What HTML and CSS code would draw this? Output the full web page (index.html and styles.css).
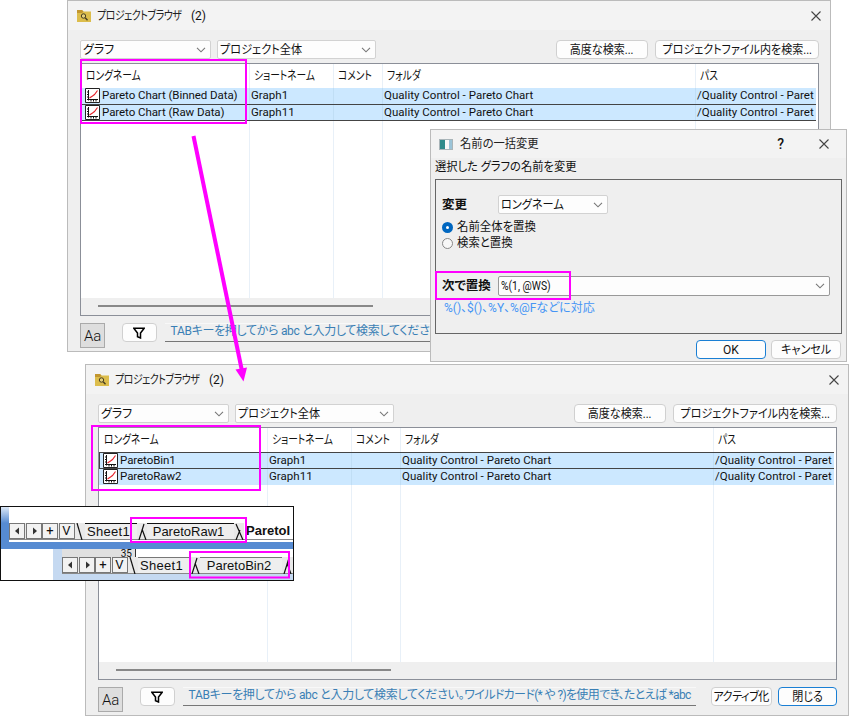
FILE: index.html
```
<!DOCTYPE html>
<html lang="ja">
<head>
<meta charset="utf-8">
<title>プロジェクトブラウザ</title>
<link rel="stylesheet" href="styles.css">
</head>
<body>
<svg class="defs" width="0" height="0">
  <symbol id="chev" viewBox="0 0 10 6"><path d="M1 .8 5 4.8 9 .8" fill="none" stroke="#777" stroke-width="1.1"/></symbol>
  <symbol id="close" viewBox="0 0 10 10"><path d="M.5.5l9 9M9.500.5l-9 9" fill="none" stroke="#444" stroke-width="1.1"/></symbol>
  <symbol id="folder" viewBox="0 0 14 12"><path d="M0 0h5l1.500 1.500H14V12H0z" fill="#dcbd4c"/><path d="M0 0h5l1.500 1.500L5 3H0z" fill="#c2962f"/><circle cx="6.500" cy="6" r="2.200" fill="#e3cf7a" stroke="#473e22"/><path d="M8.200 7.800l2.300 2.500" stroke="#473e22" stroke-width="1.400"/></symbol>
  <symbol id="graph" viewBox="0 0 15 15"><path d="M.5.5h14v14H.5z" fill="#fff" stroke="#222"/><path d="M3.500 2v10.500M2 11.500h11M2 4h1M2 6.500h1M2 9h1M6 12v1.500M8.500 12v1.500M11 12v1.500" stroke="#111" fill="none"/><path d="M4.500 10l3-2 2-1.500 3-4" stroke="#e5202a" stroke-width="1.100" fill="none"/></symbol>
  <symbol id="filter" viewBox="0 0 12 12"><path d="M.8 1.200h10.400L7.500 6v5L4.500 9.800V6z" fill="#fff" stroke="#000" stroke-width="1.500"/></symbol>
</svg>

<section class="window first">
  <header class="titlebar"><svg class="folder"><use href="#folder"/></svg><span class="title">プロジェクトブラウザ</span><span class="count">(2)</span><svg class="close"><use href="#close"/></svg></header>
  <div class="toolbar">
    <div class="select kind"><span>グラフ</span><svg class="chev"><use href="#chev"/></svg></div>
    <div class="select scope"><span>プロジェクト全体</span><svg class="chev"><use href="#chev"/></svg></div>
    <button class="btn advanced"><span>高度な検索...</span></button>
    <button class="btn infile"><span>プロジェクトファイル内を検索...</span></button>
  </div>
  <div class="table">
    <div class="row head"><span><em>ロングネーム</em></span><span><em>ショートネーム</em></span><span><em>コメント</em></span><span><em>フォルダ</em></span><span><em>パス</em></span></div>
    <div class="row item"><span><svg class="graph"><use href="#graph"/></svg>Pareto Chart (Binned Data)</span><span>Graph1</span><span></span><span>Quality Control - Pareto Chart</span><span>/Quality Control - Paret</span></div>
    <div class="row item focus"><span><svg class="graph"><use href="#graph"/></svg>Pareto Chart (Raw Data)</span><span>Graph11</span><span></span><span>Quality Control - Pareto Chart</span><span>/Quality Control - Paret</span></div>
    <div class="row blank"><span></span><span></span><span></span><span></span><span></span></div>
    <div class="hscroll"><i></i></div>
  </div>
  <footer class="bottom">
    <button class="case">Aa</button>
    <button class="btn filter"><svg><use href="#filter"/></svg></button>
    <div class="search"><span>TABキーを押してから abc と入力して検索してください。</span><span class="wild">ワイルドカード(* や ?)を使用でき、たとえば *abc</span></div>
    <button class="btn activate"><span>アクティブ化</span></button>
    <button class="btn primary shut"><span>閉じる</span></button>
  </footer>
</section>

<section class="window second">
  <header class="titlebar"><svg class="folder"><use href="#folder"/></svg><span class="title">プロジェクトブラウザ</span><span class="count">(2)</span><svg class="close"><use href="#close"/></svg></header>
  <div class="toolbar">
    <div class="select kind"><span>グラフ</span><svg class="chev"><use href="#chev"/></svg></div>
    <div class="select scope"><span>プロジェクト全体</span><svg class="chev"><use href="#chev"/></svg></div>
    <button class="btn advanced"><span>高度な検索...</span></button>
    <button class="btn infile"><span>プロジェクトファイル内を検索...</span></button>
  </div>
  <div class="table">
    <div class="row head"><span><em>ロングネーム</em></span><span><em>ショートネーム</em></span><span><em>コメント</em></span><span><em>フォルダ</em></span><span><em>パス</em></span></div>
    <div class="row item focus"><span><svg class="graph"><use href="#graph"/></svg>ParetoBin1</span><span>Graph1</span><span></span><span>Quality Control - Pareto Chart</span><span>/Quality Control - Paret</span></div>
    <div class="row item"><span><svg class="graph"><use href="#graph"/></svg>ParetoRaw2</span><span>Graph11</span><span></span><span>Quality Control - Pareto Chart</span><span>/Quality Control - Paret</span></div>
    <div class="row blank"><span></span><span></span><span></span><span></span><span></span></div>
    <div class="hscroll"><i></i></div>
  </div>
  <footer class="bottom">
    <button class="case">Aa</button>
    <button class="btn filter"><svg><use href="#filter"/></svg></button>
    <div class="search"><span>TABキーを押してから abc と入力して検索してください。</span><span class="wild">ワイルドカード(* や ?)を使用でき、たとえば *abc</span></div>
    <button class="btn activate"><span>アクティブ化</span></button>
    <button class="btn primary shut"><span>閉じる</span></button>
  </footer>
</section>

<section class="dialog">
  <header class="titlebar"><i class="appicon"></i><span class="title">名前の一括変更</span><span class="help">?</span><svg class="close"><use href="#close"/></svg></header>
  <p class="lead">選択した グラフの名前を変更</p>
  <div class="group">
    <div class="field"><b>変更</b><div class="select"><span>ロングネーム</span><svg class="chev"><use href="#chev"/></svg></div></div>
    <label class="radio"><i class="on"></i><span>名前全体を置換</span></label>
    <label class="radio"><i></i><span>検索と置換</span></label>
    <div class="field replace"><b>次で置換</b><div class="select"><span>%(1, @WS)</span><svg class="chev"><use href="#chev"/></svg></div></div>
    <p class="hint">%()、$()、%Y、%@Fなどに対応</p>
  </div>
  <div class="actions"><button class="btn primary">OK</button><button class="btn"><span>キャンセル</span></button></div>
</section>

<section class="sheets">
  <div class="book back">
    <div class="tabs"><i class="nav"><svg><path d="M8 2.500v7L4 6z"/></svg></i><i class="nav"><svg><path d="M5 2.500v7L9 6z"/></svg></i><i class="nav">+</i><i class="nav">V</i><svg class="slant"><path d="M2 0l5 17"/></svg><span class="sheet1">Sheet1</span><svg class="slant"><path d="M7 1L2 17M5 6l4 11"/></svg><span class="active">ParetoRaw1</span><svg class="slant"><path d="M2 1l7 16M6 7L2 17"/></svg><b>ParetoI</b></div>
  </div>
  <div class="book front">
    <div class="axis"><span>35</span></div>
    <div class="tabs"><i class="nav"><svg><path d="M8 2.500v7L4 6z"/></svg></i><i class="nav"><svg><path d="M5 2.500v7L9 6z"/></svg></i><i class="nav">+</i><i class="nav">V</i><svg class="slant"><path d="M2 0l5 17"/></svg><span class="sheet1">Sheet1</span><svg class="slant"><path d="M7 1L2 17M5 6l4 11"/></svg><span class="active">ParetoBin2</span><svg class="slant"><path d="M7 1L2 17M5 6l4 11"/></svg></div>
  </div>
</section>

<svg class="marks" width="850" height="716" viewBox="0 0 850 716">
  <g fill="none" stroke="#f0f" stroke-width="2">
    <rect x="81" y="60" width="165" height="63"/>
    <rect x="92" y="426" width="168" height="64"/>
    <rect x="436" y="272" width="134" height="27"/>
    <rect x="131" y="518" width="115" height="24"/>
    <rect x="190" y="552" width="99" height="25.500"/>
  </g>
  <path d="M193.500 136L242 371" stroke="#f0f" stroke-width="4"/>
  <path d="M235.500 369.500L247 367.500L243.500 381.500z" fill="#f0f"/>
</svg>
</body>
</html>
```
FILE: styles.css
```
* { box-sizing: border-box; }
body { margin: 0; position: relative; width: 850px; height: 716px; overflow: hidden; background: #fff; color: #111;
  font: 12px/16px Roboto, "Noto Sans CJK JP", sans-serif; font-feature-settings: "palt"; white-space: nowrap; }
p { margin: 0; }
i { font-style: normal; }
svg { display: block; flex: none; }
.defs { position: absolute; }
button { font: inherit; color: inherit; font-feature-settings: inherit; margin: 0; padding: 0; }

/* Windows */
.window { position: absolute; display: flex; flex-direction: column; width: 764px; height: 352px; border: 1px solid #bbb; background: #efefef; }
.first { left: 67px; top: 0; }
.second { left: 85px; top: 364px; }
.titlebar { display: flex; align-items: center; height: 29px; background: #f3f3f3; padding: 0 9px; flex: none; }
.folder { width: 14px; height: 12px; margin-right: 6px; }
.title { width: 94px; color: #222; letter-spacing: -.6px; transform: scaleX(.83); transform-origin: left; }
.close { width: 10px; height: 10px; margin-left: auto; }
.toolbar { display: flex; padding: 10px 11px 0 12px; height: 33px; flex: none; }
.select { display: flex; align-items: center; justify-content: space-between; height: 19px; padding: 0 4px 0 2px; background: #fdfdfd; border: 1px solid #d2d2d2; border-radius: 2px; }
.select span { transform: scaleX(.93); transform-origin: left; }
.chev { width: 10px; height: 6px; }
.kind { width: 131px; margin-right: 6px; }
.kind span { transform: none; }
.scope { width: 159px; }
.btn { display: flex; align-items: center; justify-content: center; height: 19px; background: #fdfdfd; border: 1px solid #d0d0d0; border-radius: 4px; }
.btn span { transform: scaleX(.92); }
.advanced { width: 92px; margin-left: auto; margin-right: 7px; }
.infile { width: 164px; }

/* Table */
.table { margin: 0 11px 0 12px; height: 253px; border: 1px solid #8b8f98; background: #fff; display: flex; flex-direction: column; flex: none; overflow: hidden; }
.row { display: grid; grid-template-columns: 169px 84px 49px 313px 1fr; flex: none; }
.row > span { overflow: hidden; padding-left: 3px; border-right: 1px solid #e8f0f8; }
.row > span:last-child { border: 0; }
.head { height: 24px; line-height: 25px; }
.head > span { padding-left: 4px; }
.head > span:first-child { padding-left: 5px; }
.head em { display: inline-block; font-style: normal; transform: scaleX(.81); transform-origin: left; }
.item { height: 16px; line-height: 15px; background: #cce8ff; margin-right: 2px; font-size: 11.500px; letter-spacing: .02px; }
.item > span { padding-left: 1px; border-color: #c0def5; }
.item > span:first-child { display: flex; padding-left: 4px; letter-spacing: -.06px; }
.graph { width: 15px; height: 15px; margin-right: 2px; }
.item.focus { height: 17px; border: solid #444; border-width: 1px 0 1px 1px; grid-template-columns: 168px 84px 49px 313px 1fr; }
.focus > span:first-child { padding-left: 3px; }
.blank { flex: 1; }
.hscroll { height: 17px; background: #efefef; padding: 7px 0 0 17px; flex: none; }
.hscroll i { display: block; width: 275px; height: 2px; background: #888; }

/* Search bar */
.bottom { display: flex; padding: 7px 11px 0 12px; }
.case { width: 26px; height: 25px; background: #dedede; border: 1px solid #aaa; font-size: 15px; font-weight: 300; }
.filter { width: 35px; margin-left: 17px; }
.filter svg { width: 12px; height: 12px; }
.search { width: 513px; height: 19px; margin-left: 8px; padding: 0 6px; border-bottom: 1px solid #777; border-top: 1px solid #f8f8f8; color: #3a7fb5; line-height: 14px; letter-spacing: -.3px; }
.wild { letter-spacing: -.65px; }
.activate { width: 61px; margin-left: 15px; letter-spacing: -.5px; }
.shut { width: 61px; margin-left: 6px; }
.btn.primary { border-color: #1a7fd4; }

/* Rename dialog */
.dialog { position: absolute; left: 430px; top: 129px; width: 417px; height: 233px; background: #efefef; border: 1px solid #bbb; }
.dialog .titlebar { height: 28px; padding: 0 17px 0 8px; }
.dialog .title { letter-spacing: 0; transform: scaleX(.94); }
.appicon { width: 14px; height: 11px; margin-right: 7px; border: 1px solid #a9b5b9; background: linear-gradient(90deg, #2f8b8b 45%, #f8f8f8 45% 75%, #9bc4d8 75%); }
.help { margin-left: auto; font-size: 14px; font-weight: 500; }
.dialog .help + .close { margin-left: 35px; }
.lead { padding-left: 4px; line-height: 18px; height: 21px; transform: scaleX(.94); transform-origin: 4px 50%; }
.group { margin-left: 4px; width: 407px; height: 155px; border: 1px solid #666; padding: 15px 6px 0; }
.field { display: flex; align-items: center; }
.field b { width: 56px; font-size: 12.500px; }
.field .select { width: 110px; }
.radio { display: flex; align-items: center; height: 16px; }
.radio span { transform: scaleX(.95); transform-origin: left; }
.field + .radio { margin-top: 5px; }
.radio i { width: 11px; height: 11px; border: 1px solid #888; border-radius: 50%; margin-right: 4px; background: #f8f8f8; }
.radio .on { border: 4px solid #0067c0; background: #fff; }
.field.replace { margin-top: 25px; }
.field.replace .select { width: 332px; height: 20px; border-color: #999; }
.field.replace .select span { transform: scaleX(.86); }
.hint { color: #4595f5; padding-left: 2px; line-height: 24px; }
.actions { display: flex; justify-content: flex-end; gap: 5px; padding: 6px 5px 0; }
.actions .btn { width: 70px; }

/* Sheet tabs */
.sheets { position: absolute; left: 0; top: 506px; width: 294px; height: 75px; border: 1px solid #111; background: #fff; overflow: hidden; }
.book.back { height: 42px; padding: 16px 0 0 8px; border-bottom: 7px solid #568bd2; background: linear-gradient(#dce8f7, #568bd2 16px) left / 8px 100% no-repeat; }
.tabs { display: flex; height: 17px; border-bottom: 1px solid #888; background: #e9e9e9; }
.nav { display: flex; align-items: center; justify-content: center; width: 16px; height: 16px; margin-right: .5px; border: 1px solid #777; background: #f2f2f2; font-size: 13px; flex: none; }
.nav svg { width: 12px; height: 12px; fill: #333; }
.slant { width: 10px; height: 17px; fill: none; stroke: #111; stroke-width: 1.200; }
.sheet1, .active { background: #eee; border-top: 1px solid #111; font: 13px/16px "Liberation Sans", sans-serif; letter-spacing: .3px; flex: none; }
.sheet1 { width: 52px; padding-left: 2px; }
.active { width: 87px; padding-right: 4px; text-align: center; letter-spacing: 0; }
.tabs b { padding-left: 2px; font: bold 13px/16px "Liberation Sans", sans-serif; letter-spacing: 0; background: #fff; flex: 1; height: 16px; }
.book.front { margin-left: 52px; height: 33px; border-left: 9px solid #c5d9f1; border-bottom: 8px solid #c5d9f1; }
.front .active { width: 82px; }
.front .sheet1, .front .active { border-color: #777; }
.axis { height: 8px; width: 74px; background: #e0e0e0; border-right: 1px solid #333; overflow: hidden; text-align: right; font-size: 10px; line-height: 10px; padding-right: 3px; }
.marks { position: absolute; left: 0; top: 0; }
```
